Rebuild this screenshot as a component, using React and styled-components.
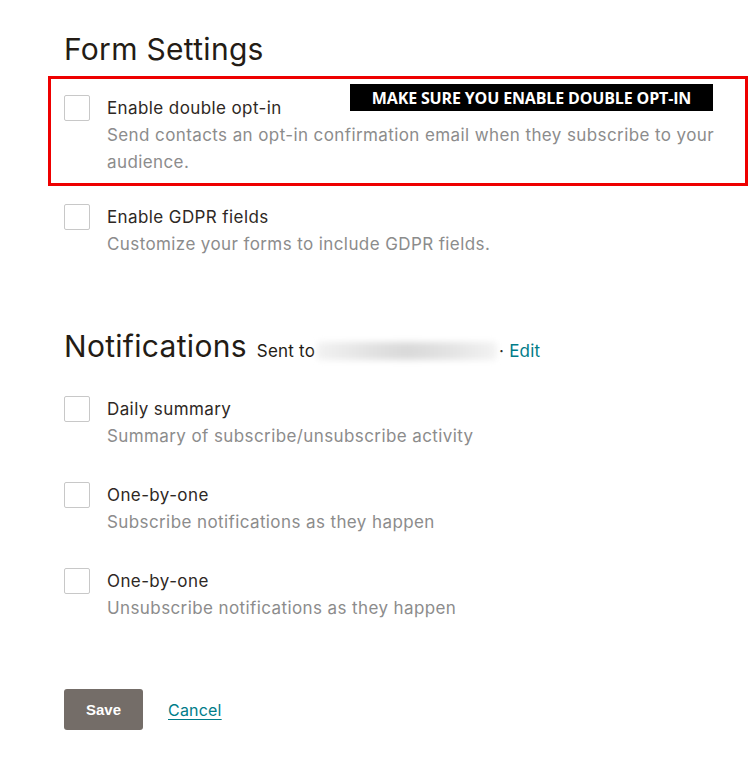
import React from "react";
import styled, { createGlobalStyle } from "styled-components";

const Global = createGlobalStyle`
  html, body { margin: 0; padding: 0; background: #fff; }
  body { font-family: "Inter", "Liberation Sans", sans-serif; color: #241c15; }
`;

const Page = styled.div`
  padding: 30px 0 40px 64px;
  width: 756px;
  box-sizing: border-box;
`;

const Heading = styled.h2`
  margin: 0;
  font-weight: 400;
  font-size: 30px;
  line-height: 38px;
  letter-spacing: 0.3px;
  color: #241c15;
  display: flex;
  align-items: baseline;
  gap: 10px;
`;

const Highlight = styled.div`
  position: relative;
  margin: 8px 0 0 -16px;
  width: 700px;
  box-sizing: border-box;
  border: 3px solid #ee0000;
  padding: 16px 0 7px 13px;
`;

const Banner = styled.div`
  position: absolute;
  top: 5px;
  left: 299px;
  width: 363px;
  height: 27px;
  background: #000;
  color: #fff;
  font-family: "Open Sans", "Liberation Sans", sans-serif;
  font-weight: 700;
  font-size: 16px;
  letter-spacing: -0.15px;
  display: flex;
  align-items: center;
  justify-content: center;
`;

const List = styled.div`
  display: flex;
  flex-direction: column;
  gap: 32px;
  margin-top: ${(p) => p.$top || 0}px;
`;

const Item = styled.label`
  display: flex;
  align-items: flex-start;
`;

const Box = styled.span`
  flex: none;
  width: 26px;
  height: 26px;
  box-sizing: border-box;
  border: 1px solid #c8c8c8;
  border-radius: 2px;
  background: #fff;
  margin-right: 17px;
`;

const Text = styled.div`
  display: flex;
  flex-direction: column;
  font-size: 17px;
  letter-spacing: 0.4px;
`;

const Label = styled.span`
  line-height: 27px;
  color: #2e2824;
`;

const Desc = styled.span`
  line-height: 27px;
  color: #8c8c8c;
  max-width: 612px;
`;

const Section = styled.section`
  margin-top: ${(p) => p.$top || 0}px;
`;

const SentTo = styled.span`
  font-size: 17px;
  letter-spacing: 0.2px;
  color: #241c15;
  display: inline-flex;
  align-items: center;
`;

const Blur = styled.span`
  display: inline-block;
  width: 180px;
  height: 18px;
  margin: 0 2px 0 2px;
  background: linear-gradient(90deg, #f2f2f2, #e2e2e2 30%, #d9d9d9 50%, #e4e4e4 75%, #f3f3f3);
  filter: blur(3px);
  border-radius: 4px;
`;

const Link = styled.a`
  color: #007c89;
  text-decoration: none;
  cursor: pointer;
`;

const Actions = styled.div`
  display: flex;
  align-items: center;
  gap: 25px;
  margin-top: 67px;
`;

const SaveButton = styled.button`
  width: 79px;
  height: 41px;
  border: none;
  border-radius: 3px;
  background: #746d68;
  color: #fff;
  font-family: "Liberation Sans", Arial, sans-serif;
  font-weight: 700;
  font-size: 15px;
  cursor: pointer;
`;

const Cancel = styled.a`
  color: #007c89;
  font-size: 16px;
  letter-spacing: 0.2px;
  text-decoration: underline;
  text-underline-offset: 3px;
  cursor: pointer;
`;

function Check({ label, desc }) {
  return (
    <Item>
      <Box />
      <Text>
        <Label>{label}</Label>
        <Desc>{desc}</Desc>
      </Text>
    </Item>
  );
}

export default function App() {
  return (
    <>
      <Global />
      <Page>
        <Section>
          <Heading>Form Settings</Heading>
          <Highlight>
            <Banner>MAKE SURE YOU ENABLE DOUBLE OPT-IN</Banner>
            <Check
              label="Enable double opt-in"
              desc="Send contacts an opt-in confirmation email when they subscribe to your audience."
            />
          </Highlight>
          <List $top={18}>
            <Check label="Enable GDPR fields" desc="Customize your forms to include GDPR fields." />
          </List>
        </Section>
        <Section $top={69}>
          <Heading>
            Notifications
            <SentTo>
              Sent to
              <Blur />
              {"\u00b7\u00a0"}
              <Link>Edit</Link>
            </SentTo>
          </Heading>
          <List $top={26}>
            <Check label="Daily summary" desc="Summary of subscribe/unsubscribe activity" />
            <Check label="One-by-one" desc="Subscribe notifications as they happen" />
            <Check label="One-by-one" desc="Unsubscribe notifications as they happen" />
          </List>
        </Section>
        <Actions>
          <SaveButton>Save</SaveButton>
          <Cancel>Cancel</Cancel>
        </Actions>
      </Page>
    </>
  );
}
